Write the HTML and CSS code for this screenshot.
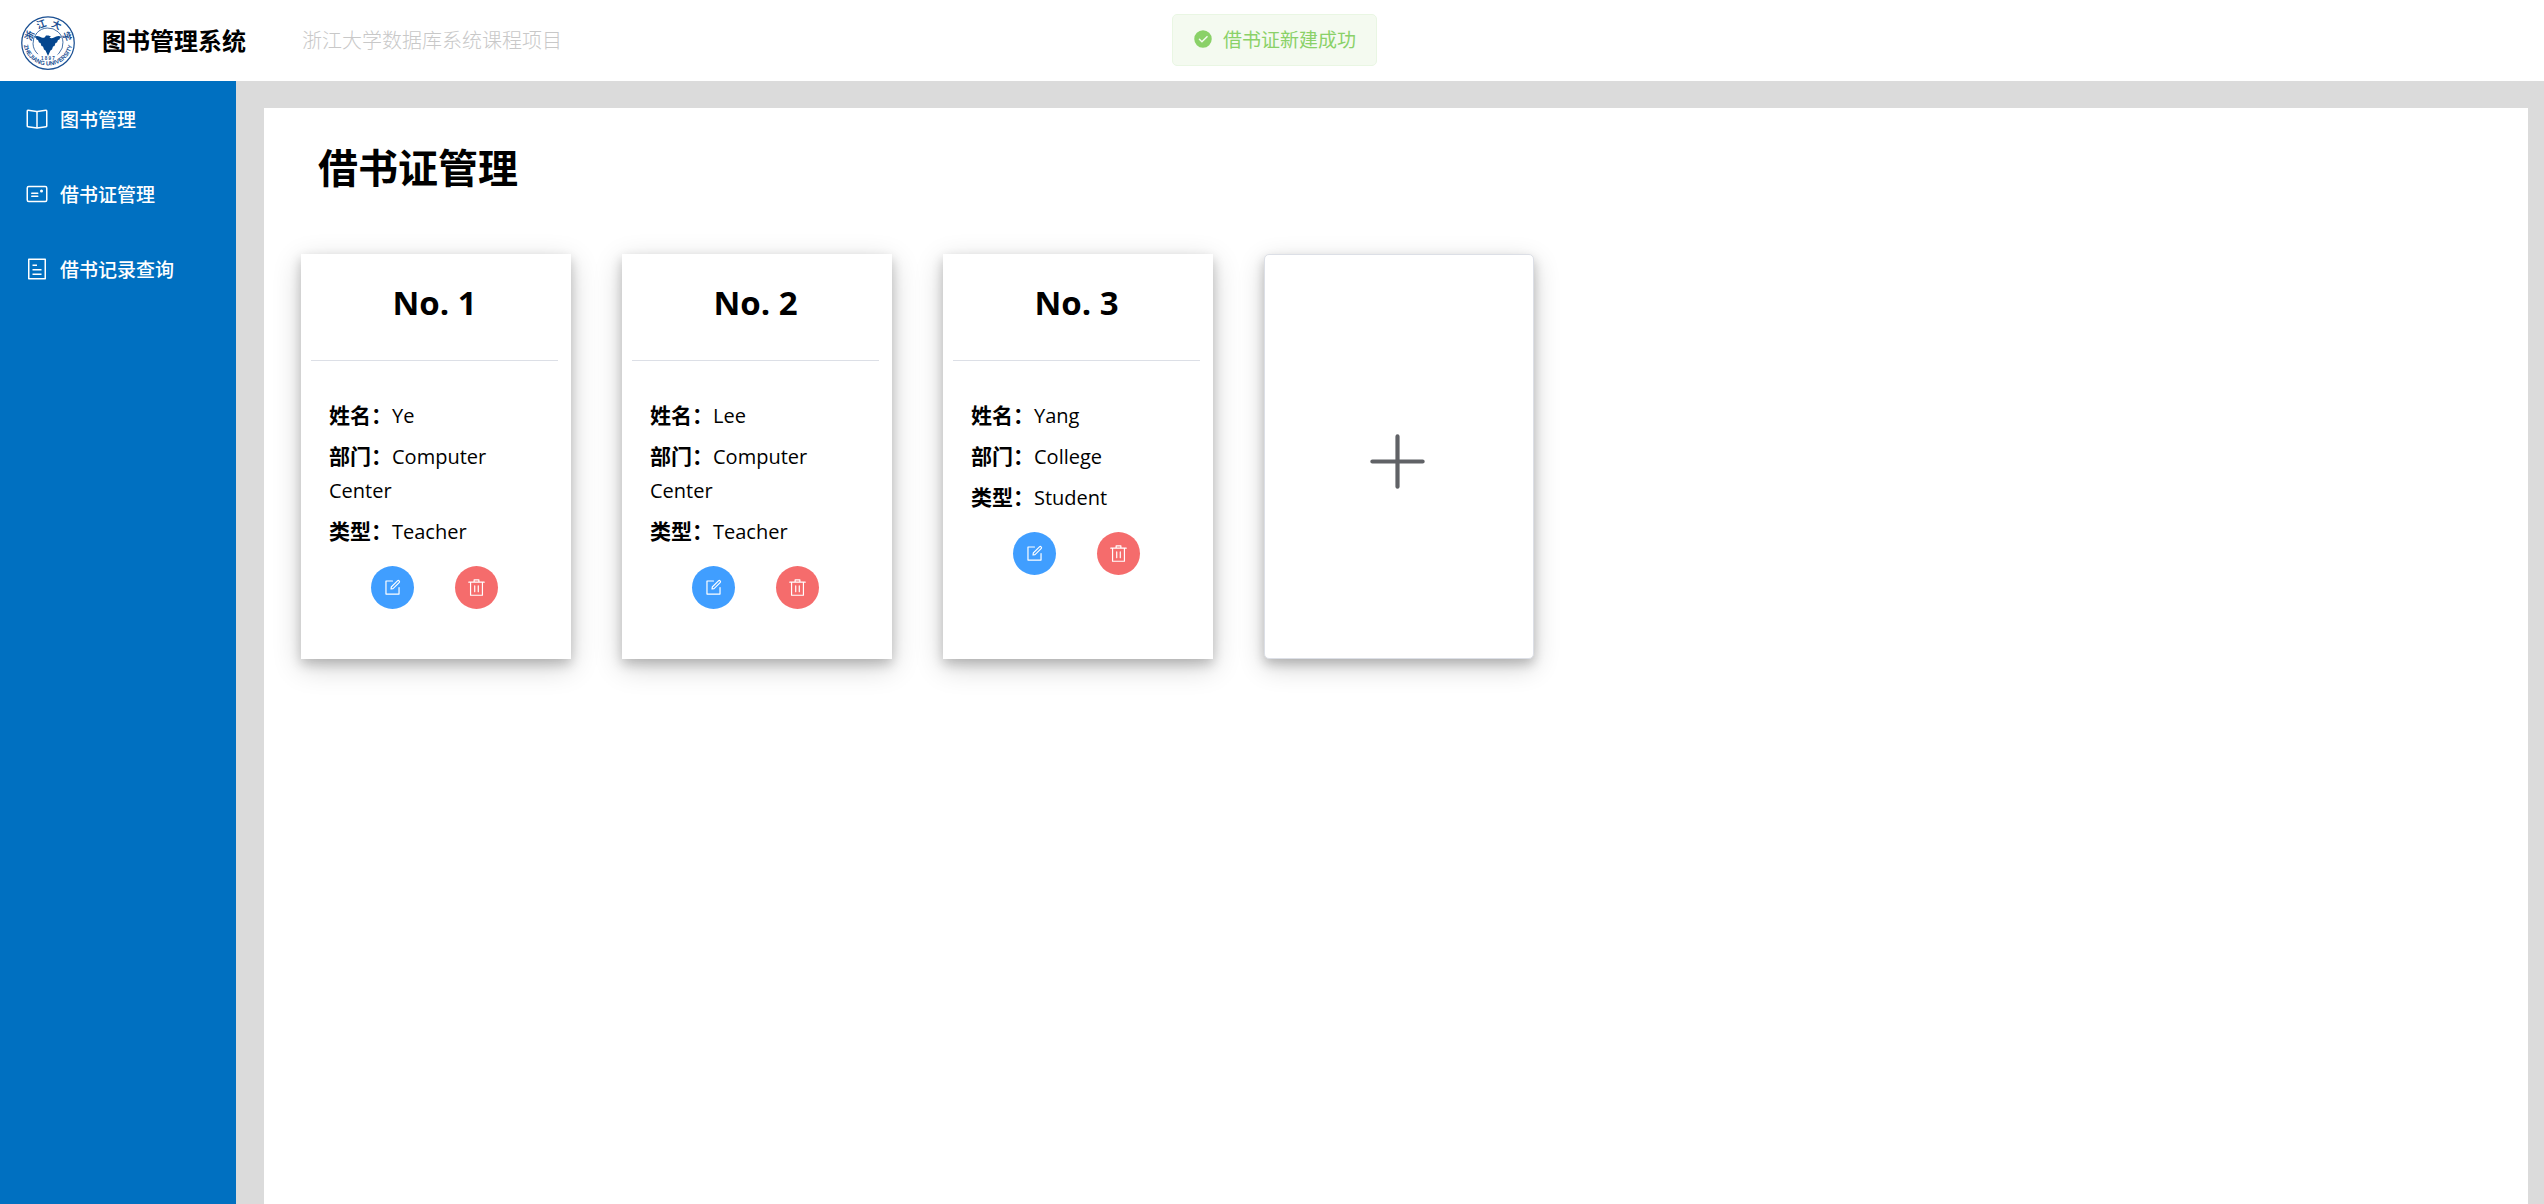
FILE: index.html
```html
<!DOCTYPE html>
<html lang="zh-CN">
<head>
<meta charset="utf-8">
<meta name="viewport" content="width=device-width, initial-scale=1">
<title>图书管理系统</title>
<link rel="stylesheet" href="styles.css">
</head>
<body>
<svg class="sprite" aria-hidden="true">
  <symbol id="i-edit" viewBox="0 0 1024 1024"><path d="M832 512a32 32 0 1 1 64 0v352a32 32 0 0 1-32 32H160a32 32 0 0 1-32-32V160a32 32 0 0 1 32-32h352a32 32 0 0 1 0 64H192v640h640V512z"/><path d="m469.952 554.24 52.8-7.552L847.104 222.4a32 32 0 1 0-45.248-45.248L477.44 501.44l-7.552 52.8zm422.4-422.4a96 96 0 0 1 0 135.808l-331.84 331.84a32 32 0 0 1-18.112 9.088L436.8 623.68a32 32 0 0 1-36.224-36.224l15.104-105.6a32 32 0 0 1 9.024-18.112l331.904-331.84a96 96 0 0 1 135.744 0z"/></symbol>
  <symbol id="i-delete" viewBox="0 0 1024 1024"><path d="M160 256H96a32 32 0 0 1 0-64h256V95.936a32 32 0 0 1 32-32h256a32 32 0 0 1 32 32V192h256a32 32 0 1 1 0 64h-64v672a32 32 0 0 1-32 32H192a32 32 0 0 1-32-32V256zm448-64v-64H416v64h192zM224 896h576V256H224v640zm192-128a32 32 0 0 1-32-32V416a32 32 0 0 1 64 0v320a32 32 0 0 1-32 32zm192 0a32 32 0 0 1-32-32V416a32 32 0 0 1 64 0v320a32 32 0 0 1-32 32z"/></symbol>
</svg>

<header class="topbar">
  <svg class="logo" viewBox="0 0 108 108" role="img" aria-label="浙江大学">
    <defs>
      <path id="arc-top" d="M21 54a33 33 0 0 1 66 0"/>
      <path id="arc-bottom" d="M5 50a49 49 0 0 0 98 0"/>
    </defs>
    <circle cx="54" cy="54" r="52.5" fill="#fff" stroke="#1a4f92" stroke-width="2.5"/>
    <circle cx="54" cy="54" r="30" fill="none" stroke="#1a4f92" stroke-width="1.5" stroke-dasharray="145 43.5" transform="rotate(132 54 54)"/>
    <path fill="#05478f" d="M26 42c5-3 10-2 15 1 3 1 5 1 7-1l2-3h5l5 2-3 2c2 2 6 2 9 0 5-3 10-4 15-1-2 1-4 3-4 5l-3 1-2 5-3 1-2 6-3 1-2 6-3 2-5 11-5-11-3-2-2-6-3-1-2-6-3-1-2-5-3-1c0-2-2-4-4-5z"/>
    <g fill="#1a4f92" text-anchor="middle">
      <text class="logo-hanzi"><textPath href="#arc-top" startOffset="12%">浙</textPath></text>
      <text class="logo-hanzi"><textPath href="#arc-top" startOffset="39%">江</textPath></text>
      <text class="logo-hanzi"><textPath href="#arc-top" startOffset="64%">大</textPath></text>
      <text class="logo-hanzi"><textPath href="#arc-top" startOffset="89%">学</textPath></text>
      <text class="logo-latin"><textPath href="#arc-bottom" startOffset="50%">ZHEJIANG UNIVERSITY</textPath></text>
      <text class="logo-year" x="54" y="88">1 8 9 7</text>
    </g>
  </svg>
  <span class="brand">图书管理系统</span>
  <span class="subtitle">浙江大学数据库系统课程项目</span>
</header>

<div class="toast-layer">
  <div class="toast" role="status">
    <svg class="toast-icon" viewBox="0 0 1024 1024" aria-hidden="true"><path d="M512 64a448 448 0 1 1 0 896 448 448 0 0 1 0-896zm-55.808 536.384-99.52-99.584a38.4 38.4 0 1 0-54.336 54.336l126.72 126.72a38.272 38.272 0 0 0 54.336 0l262.4-262.464a38.4 38.4 0 1 0-54.272-54.336L456.192 600.384z"/></svg>
    <span>借书证新建成功</span>
  </div>
</div>

<div class="layout">
  <nav class="sidebar">
    <a class="menu-item" href="#book">
      <svg class="menu-icon" viewBox="0 0 1024 1024" aria-hidden="true"><path d="m512 863.36 384-54.848v-638.72L525.568 222.72a96 96 0 0 1-27.136 0L128 169.792v638.72l384 54.848zM137.024 106.432l370.432 52.928a32 32 0 0 0 9.088 0l370.432-52.928A64 64 0 0 1 960 169.792v638.72a64 64 0 0 1-54.976 63.36l-388.48 55.488a32 32 0 0 1-9.088 0l-388.48-55.488A64 64 0 0 1 64 808.512v-638.72a64 64 0 0 1 73.024-63.36z"/><path d="M480 192h64v704h-64z"/></svg>
      <span>图书管理</span>
    </a>
    <a class="menu-item" href="#card">
      <svg class="menu-icon" viewBox="0 0 1024 1024" aria-hidden="true"><path d="M160 224a32 32 0 0 0-32 32v512a32 32 0 0 0 32 32h704a32 32 0 0 0 32-32V256a32 32 0 0 0-32-32H160zm0-64h704a96 96 0 0 1 96 96v512a96 96 0 0 1-96 96H160a96 96 0 0 1-96-96V256a96 96 0 0 1 96-96z"/><path d="M704 320a64 64 0 1 1 0 128 64 64 0 0 1 0-128zM288 448h256q32 0 32 32t-32 32H288q-32 0-32-32t32-32zm0 128h256q32 0 32 32t-32 32H288q-32 0-32-32t32-32z"/></svg>
      <span>借书证管理</span>
    </a>
    <a class="menu-item" href="#borrow">
      <svg class="menu-icon" viewBox="0 0 1024 1024" aria-hidden="true"><path d="M192 128v768h640V128H192zm-32-64h704a32 32 0 0 1 32 32v832a32 32 0 0 1-32 32H160a32 32 0 0 1-32-32V96a32 32 0 0 1 32-32zm160 448h384v64H320v-64zm0-192h192v64H320v-64zm0 384h384v64H320v-64z"/></svg>
      <span>借书记录查询</span>
    </a>
  </nav>

  <main class="content">
    <section class="panel">
      <h1 class="page-title">借书证管理</h1>
      <div class="card-list">
        <article class="card">
          <h2 class="card-title">No. 1</h2>
          <div class="card-body">
            <p class="field"><b>姓名：</b>Ye</p>
            <p class="field"><b>部门：</b>Computer Center</p>
            <p class="field"><b>类型：</b>Teacher</p>
            <div class="actions">
              <button class="round edit" type="button" aria-label="编辑"><svg aria-hidden="true"><use href="#i-edit"/></svg></button>
              <button class="round delete" type="button" aria-label="删除"><svg aria-hidden="true"><use href="#i-delete"/></svg></button>
            </div>
          </div>
        </article>
        <article class="card">
          <h2 class="card-title">No. 2</h2>
          <div class="card-body">
            <p class="field"><b>姓名：</b>Lee</p>
            <p class="field"><b>部门：</b>Computer Center</p>
            <p class="field"><b>类型：</b>Teacher</p>
            <div class="actions">
              <button class="round edit" type="button" aria-label="编辑"><svg aria-hidden="true"><use href="#i-edit"/></svg></button>
              <button class="round delete" type="button" aria-label="删除"><svg aria-hidden="true"><use href="#i-delete"/></svg></button>
            </div>
          </div>
        </article>
        <article class="card">
          <h2 class="card-title">No. 3</h2>
          <div class="card-body">
            <p class="field"><b>姓名：</b>Yang</p>
            <p class="field"><b>部门：</b>College</p>
            <p class="field"><b>类型：</b>Student</p>
            <div class="actions">
              <button class="round edit" type="button" aria-label="编辑"><svg aria-hidden="true"><use href="#i-edit"/></svg></button>
              <button class="round delete" type="button" aria-label="删除"><svg aria-hidden="true"><use href="#i-delete"/></svg></button>
            </div>
          </div>
        </article>
        <button class="card card-add" type="button" aria-label="新建借书证">
          <svg class="plus" viewBox="0 0 1024 1024" aria-hidden="true"><path d="M480 480V128a32 32 0 0 1 64 0v352h352a32 32 0 1 1 0 64H544v352a32 32 0 1 1-64 0V544H128a32 32 0 0 1 0-64z"/></svg>
        </button>
      </div>
    </section>
  </main>
</div>
</body>
</html>
```

FILE: styles.css
```css
* {
  box-sizing: border-box;
}

body {
  margin: 0;
  min-height: 100vh;
  display: flex;
  flex-direction: column;
  background: #fff;
  color: #000;
  font-family: "Open Sans", "Noto Sans CJK SC", sans-serif;
}

svg {
  fill: currentColor;
}

.sprite {
  display: none;
}

/* Top bar */
.topbar {
  display: flex;
  align-items: center;
  height: 81px;
  padding: 0 21px 3px;
}

.logo {
  width: 54px;
  height: 54px;
  margin-top: 8px;
}

.logo-hanzi {
  font: 700 19px "Noto Sans CJK SC", sans-serif;
}

.logo-latin {
  font: 700 12px "Liberation Sans Narrow", "Liberation Sans", sans-serif;
}

.logo-year {
  font: 700 9px "Liberation Sans", sans-serif;
}

.brand {
  margin-left: 27px;
  font-size: 24px;
  font-weight: 700;
}

.subtitle {
  margin-left: 56px;
  color: #c8c8c8;
  font-size: 20px;
  font-weight: 300;
}

/* Message shown above the page */
.toast-layer {
  position: fixed;
  top: 14px;
  left: 0;
  right: 0;
  display: flex;
  justify-content: center;
  padding-left: 5px;
  pointer-events: none;
}

.toast {
  display: flex;
  align-items: center;
  gap: 10px;
  height: 52px;
  padding: 0 20px 2px;
  border: 1px solid #e9f6e3;
  border-radius: 5px;
  background: #f4faf0;
  color: #8ad168;
  font-size: 19px;
}

.toast-icon {
  width: 20px;
  height: 20px;
}

/* Side menu */
.layout {
  flex: 1;
  display: flex;
}

.sidebar {
  flex: none;
  width: 236px;
  background: #0070c1;
}

.menu-item {
  display: flex;
  align-items: center;
  gap: 11px;
  height: 75px;
  padding: 0 25px;
  color: #fff;
  font-size: 19px;
  font-weight: 500;
  text-decoration: none;
}

.menu-icon {
  width: 24px;
  height: 24px;
}

/* Main area */
.content {
  flex: 1;
  display: flex;
  padding: 27px 16px 0 28px;
  background: #dbdbdb;
}

.panel {
  flex: 1;
  padding: 30px 37px;
  background: #fff;
}

.page-title {
  margin: 0 0 56px;
  padding-left: 17px;
  font-size: 40px;
  line-height: 60px;
}

.card-list {
  display: flex;
  flex-wrap: wrap;
  gap: 51px;
}

.card {
  width: 270px;
  min-height: 405px;
  padding: 0 13px 0 10px;
  background: #fff;
  box-shadow: 0 5px 11px rgba(0, 0, 0, 0.2), 0 8px 27px rgba(0, 0, 0, 0.19);
}

.card-title {
  margin: 0;
  padding: 26px 0 34px;
  border-bottom: 1px solid #dcdfe6;
  font-size: 33px;
  line-height: 46px;
  text-align: center;
}

.card-body {
  padding: 38px 18px;
}

.field {
  margin: 0 0 7px;
  font-size: 20px;
  line-height: 34px;
}

.field b {
  font-size: 21px;
  line-height: 1;
}

.actions {
  display: flex;
  justify-content: center;
  gap: 41px;
  margin-top: 17px;
}

.round {
  display: grid;
  place-items: center;
  width: 43px;
  height: 43px;
  padding: 0;
  border: 0;
  border-radius: 50%;
  color: #fff;
  cursor: pointer;
}

.round svg {
  width: 19px;
  height: 19px;
}

.edit {
  background: #409eff;
}

.delete {
  background: #f56c6c;
}

.card-add {
  display: grid;
  place-items: center;
  padding-top: 10px;
  border: 1px solid #dcdfe6;
  border-radius: 5px;
  color: #606266;
  cursor: pointer;
}

.plus {
  width: 67px;
  height: 67px;
}
```
